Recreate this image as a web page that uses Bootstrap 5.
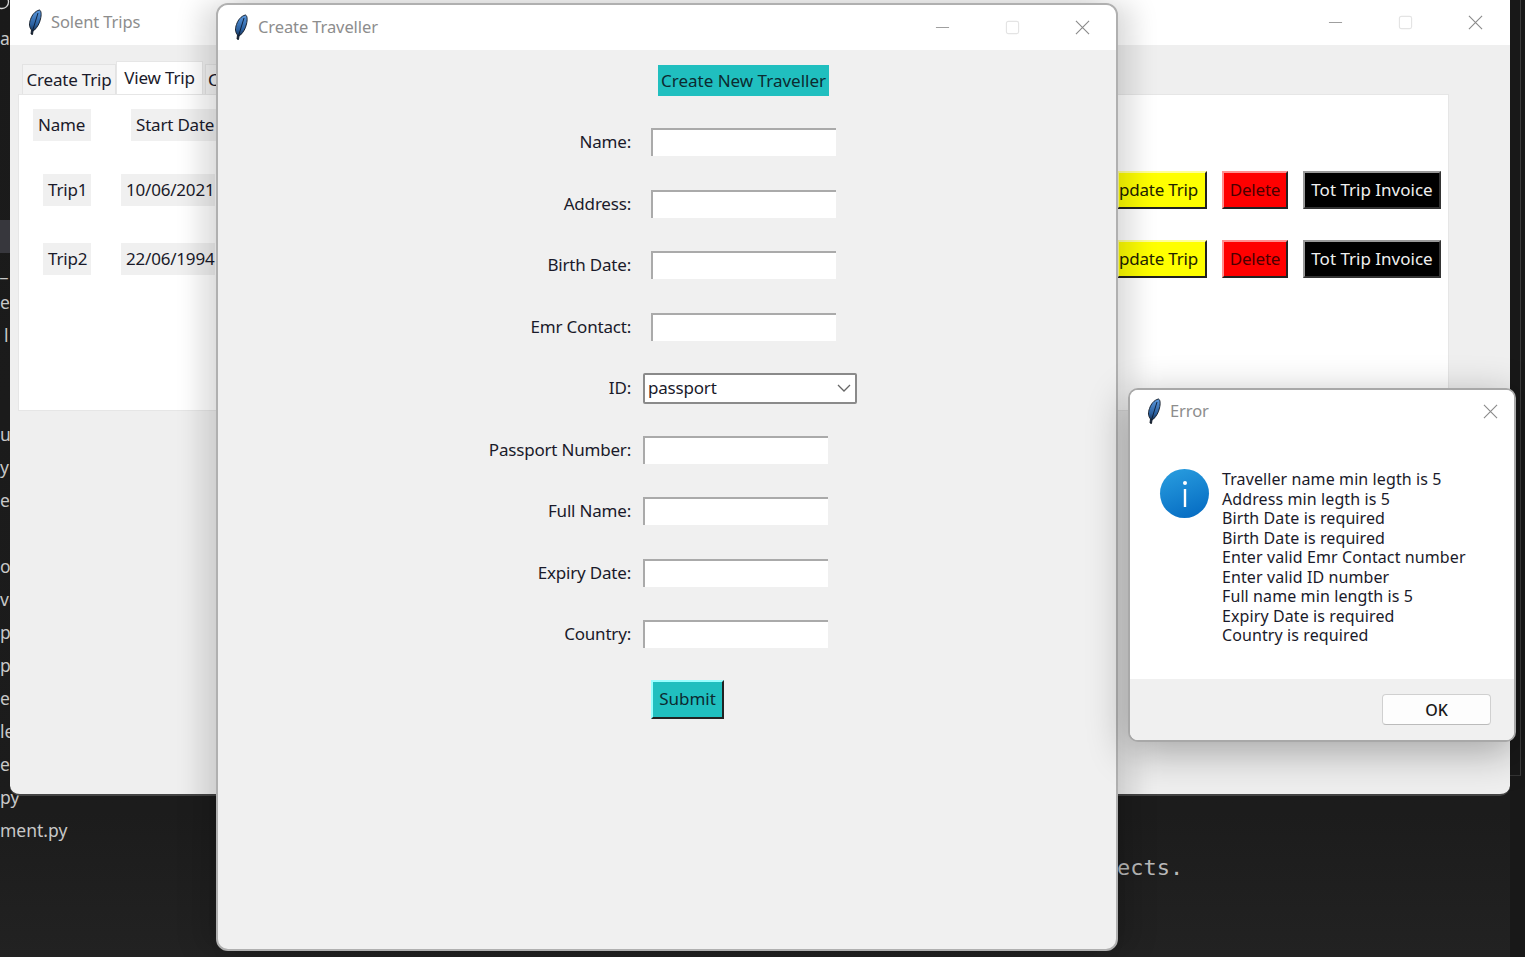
<!DOCTYPE html>
<html lang="en">
<head>
<meta charset="utf-8">
<title>Solent Trips</title>
<link href="https://cdn.jsdelivr.net/npm/bootstrap@5.3.0/dist/css/bootstrap.min.css" rel="stylesheet">
<style>
html,body{height:100%;margin:0;overflow:hidden;background:#1e1e1e}
body{font-family:"Noto Sans","Open Sans",sans-serif;color:#1a1a2a;letter-spacing:-.2px}
.desk{position:relative;width:1525px;height:957px;overflow:hidden;background:linear-gradient(#1a1a1a,#1c1c1c 85%,#222)}
.side-list{padding-top:21.5px;color:#c8c8c8;font-size:17.5px;width:100px;letter-spacing:0}
.side-row{height:33px;line-height:33px;white-space:nowrap}
.side-row.hl{background:#37373d}
.side-row.ind{padding-left:4px}
.ring{position:absolute;left:0;top:0;width:10px;height:11px}
.term-text{position:absolute;left:1117px;top:855px;font:22px/26px "DejaVu Sans Mono",monospace;color:#b9b9b9;letter-spacing:0}
.right-strip{position:absolute;left:1510px;top:0;bottom:0;width:15px;background:#181818}
.strip-box{width:11px;height:776px;border-right:1px solid #3c3c3c;border-bottom:1px solid #333}
.win{position:absolute;overflow:hidden;display:flex;flex-direction:column}
.win-main{left:10px;top:-12px;width:1500px;height:808px;border-radius:10px;background:#efefef;border-bottom:2px solid #444}
.win-trav{left:216px;top:3px;width:902px;height:948px;border-radius:12px;background:#f0f0f0;border:2px solid #b0b0b0;box-shadow:-16px 0 26px rgba(0,0,0,.13),16px 0 26px rgba(0,0,0,.13)}
.win-err{left:1128px;top:388px;width:388px;height:354px;border-radius:10px;background:#fff;border:2px solid #a8a8a8;box-shadow:0 10px 40px rgba(0,0,0,.32)}
.tbar{display:flex;align-items:center;background:#fff;flex:none;color:#8d8d8d;font-size:16.5px;letter-spacing:-.1px}
.tbar-main{height:57px;padding:12px 0 0 14px}
.tbar-trav{height:45px;padding-left:12px}
.tbar-err{height:43px;padding-left:13px}
.feather{width:20px;height:28px;flex:none;margin-right:7px}
.tbar-trav .feather{margin-right:8px}
.wctl{margin-left:auto;display:flex;align-items:center;gap:55px}
.tbar-main .wctl{padding-right:27px}
.tbar-trav .wctl{padding-right:26px}
.tbar-err .wctl{padding-right:16px}
.wctl svg{display:block;width:15px;height:15px}
.tabrow{display:flex;align-items:flex-end;height:49px;padding-left:12px;flex:none}
.tabx{background:#f3f3f3;border:1px solid #e3e3e3;border-bottom:0;font-size:17px;line-height:24px;padding:3px 0 2px;white-space:nowrap;width:94px;text-align:center}
.tabx.on{background:#fff;padding:4px 0 4px;width:87px;border-color:#e6e6e6}
.tabx.off-b{margin-left:2px;width:70px;text-align:left;padding-left:2px}
.panel-x{background:#fff;margin-left:8px;width:1431px;height:317px;border:1px solid #e6e6e6;flex:none;padding-top:14px}
.trow{display:flex;height:32px;font-size:17px}
.trow + .trow{margin-top:33px}
.trow + .trow + .trow{margin-top:37px}
.cell{background:#f0f0f0;line-height:32px;padding:0 5px;white-space:nowrap}
.c-name{margin-left:14px;width:58px}
.c-date{margin-left:40px;width:94px}
.c-trip{margin-left:24px;width:48px}
.c-val{margin-left:30px;width:94px}
.acts{margin-left:auto;display:flex;gap:15px;margin-right:7px;margin-top:-3px;height:38px}
.tkb{display:flex;align-items:center;justify-content:center;height:38px;font-size:17px;border:2px solid;white-space:nowrap;padding:0}
.tkb.y{background:#ff0;width:90px;border-color:#ffff99 #222 #222 #ffff99;color:#222200;justify-content:flex-end;padding-right:7px}
.tkb.r{background:#f00;width:66px;color:#4a0000;border-color:#ff9090 #222 #222 #ff9090}
.tkb.k{background:#000;width:138px;color:#f0f0f0;border-color:#999 #333 #333 #999;letter-spacing:0}
.trav-body{display:flex;flex-direction:column;padding-top:15px;flex:1}
.new-btn{align-self:flex-start;margin-left:440px;width:171px;height:31px;background:#20bfbf;border:0;color:#0c2a30;font-size:17px;line-height:31px;text-align:center;padding:0;margin-bottom:15.25px;white-space:nowrap}
.frow{display:flex;align-items:center;height:61.5px;font-size:17px}
.frow label{width:413px;text-align:right;margin:0;white-space:nowrap}
.tin{display:block;height:28px;width:185px;background:#fff;border:0;border-top:2px solid #aaa;border-left:2px solid #aaa;padding:0;border-radius:0;outline:0}
.t1{margin-left:20px}
.t2{margin-left:12px}
.combo{margin-left:12px;width:214px;height:31px;display:flex;align-items:center;background:#fff;border:2px solid #8a8a8a;border-radius:2px;padding-left:3px;font-size:17px}
.combo svg{margin-left:auto;margin-right:4px;width:14px;height:10px}
.sub-btn{align-self:flex-start;margin-left:433px;margin-top:15px;width:73px;height:39px;background:#20bfbf;border:2px solid;border-color:#9ff #222 #222 #9ff;font-size:17px;color:#0c2a30;padding:0;line-height:34px}
.err-body{flex:1;display:flex;padding:36px 0 0 30px;background:#fff}
.info{width:49px;height:49px;border-radius:50%;background:linear-gradient(160deg,#2a9fe0,#0368c0);display:flex;align-items:center;justify-content:center;flex:none;margin-right:13px}
.err-txt{font-size:16px;line-height:19.5px;letter-spacing:.1px;padding-top:1px}
.err-foot{height:61px;flex:none;background:#f0f0f0;display:flex;justify-content:flex-end;align-items:flex-start;padding:15px 23px 0 0}
.ok-btn{width:109px;height:31px;background:#fdfdfd;border:1px solid #d0d0d0;border-bottom-color:#bbb;border-radius:4px;font-size:16px;font-weight:500;padding:0;color:#1a1a1a}
</style>
</head>
<body>
<svg width="0" height="0" class="position-absolute">
  <defs>
    <linearGradient id="fg" x1="0" y1="0" x2="0" y2="1"><stop offset="0" stop-color="#5a98de"/><stop offset=".6" stop-color="#2a5f9e"/><stop offset="1" stop-color="#0c1a30"/></linearGradient>
    <symbol id="fth" viewBox="0 0 20 28">
      <path d="M15.500 1c2 1 2 5 1 9-1 4.500-3 8-6 11l-1.500 1-.5 3.500-1.500-.5.500-4C5 18 5 14.500 6.500 10.500 8 6 11 2 15.500 1z" fill="url(#fg)" stroke="#0d1520" stroke-width=".9"/>
      <path d="M14 4 8.500 22" stroke="#0b1a30" stroke-width=".9" fill="none"/>
    </symbol>
  </defs>
</svg>
<div class="desk">
  <div class="side-list">
    <div class="side-row">a</div><div class="side-row"></div><div class="side-row"></div><div class="side-row"></div><div class="side-row"></div><div class="side-row"></div>
    <div class="side-row hl"></div><div class="side-row">_</div><div class="side-row">e</div><div class="side-row ind">l</div><div class="side-row"></div><div class="side-row"></div>
    <div class="side-row">u</div><div class="side-row">y</div><div class="side-row">er</div><div class="side-row"></div><div class="side-row">o</div><div class="side-row">ve</div>
    <div class="side-row">p_</div><div class="side-row">p.</div><div class="side-row">er</div><div class="side-row">le</div><div class="side-row">eg</div><div class="side-row">py</div><div class="side-row">ment.py</div>
  </div>
  <svg class="ring" viewBox="0 0 10 11"><circle cx="2" cy="2" r="6.500" fill="none" stroke="#d8d8d8" stroke-width="1.300"/></svg>
  <div class="term-text">ects.</div>
  <div class="right-strip"><div class="strip-box"></div></div>

  <section class="win win-main">
    <div class="tbar tbar-main">
      <svg class="feather"><use href="#fth"/></svg><span>Solent Trips</span>
      <div class="wctl">
        <svg viewBox="0 0 16 16"><path d="M1 8h14" stroke="#999" stroke-width="1"/></svg>
        <svg viewBox="0 0 16 16"><rect x="1.500" y="1.500" width="13" height="13" rx="2" fill="none" stroke="#e4e4e4" stroke-width="1.200"/></svg>
        <svg viewBox="0 0 16 16"><path d="M1 1l14 14M15 1L1 15" stroke="#8a8a8a" stroke-width="1.200"/></svg>
      </div>
    </div>
    <div class="tabrow">
      <div class="tabx">Create Trip</div><div class="tabx on">View Trip</div><div class="tabx off-b">C</div>
    </div>
    <div class="panel-x">
      <div class="trow"><div class="cell c-name">Name</div><div class="cell c-date">Start Date</div></div>
      <div class="trow"><div class="cell c-trip">Trip1</div><div class="cell c-val">10/06/2021</div>
        <div class="acts"><div class="tkb y">pdate Trip</div><div class="tkb r">Delete</div><div class="tkb k">Tot Trip Invoice</div></div></div>
      <div class="trow"><div class="cell c-trip">Trip2</div><div class="cell c-val">22/06/1994</div>
        <div class="acts"><div class="tkb y">pdate Trip</div><div class="tkb r">Delete</div><div class="tkb k">Tot Trip Invoice</div></div></div>
    </div>
  </section>

  <section class="win win-trav">
    <div class="tbar tbar-trav">
      <svg class="feather"><use href="#fth"/></svg><span>Create Traveller</span>
      <div class="wctl">
        <svg viewBox="0 0 16 16"><path d="M1 8h14" stroke="#999" stroke-width="1"/></svg>
        <svg viewBox="0 0 16 16"><rect x="1.500" y="1.500" width="13" height="13" rx="2" fill="none" stroke="#e4e4e4" stroke-width="1.200"/></svg>
        <svg viewBox="0 0 16 16"><path d="M1 1l14 14M15 1L1 15" stroke="#8a8a8a" stroke-width="1.200"/></svg>
      </div>
    </div>
    <div class="trav-body">
      <button type="button" class="new-btn">Create New Traveller</button>
      <div class="frow"><label>Name:</label><input class="tin t1" type="text"></div>
      <div class="frow"><label>Address:</label><input class="tin t1" type="text"></div>
      <div class="frow"><label>Birth Date:</label><input class="tin t1" type="text"></div>
      <div class="frow"><label>Emr Contact:</label><input class="tin t1" type="text"></div>
      <div class="frow"><label>ID:</label><div class="combo"><span>passport</span><svg viewBox="0 0 14 10"><path d="M1 2l6 6 6-6" fill="none" stroke="#666" stroke-width="1.300"/></svg></div></div>
      <div class="frow"><label>Passport Number:</label><input class="tin t2" type="text"></div>
      <div class="frow"><label>Full Name:</label><input class="tin t2" type="text"></div>
      <div class="frow"><label>Expiry Date:</label><input class="tin t2" type="text"></div>
      <div class="frow"><label>Country:</label><input class="tin t2" type="text"></div>
      <button type="button" class="sub-btn">Submit</button>
    </div>
  </section>

  <section class="win win-err">
    <div class="tbar tbar-err">
      <svg class="feather"><use href="#fth"/></svg><span>Error</span>
      <div class="wctl"><svg viewBox="0 0 16 16"><path d="M1 1l14 14M15 1L1 15" stroke="#8a8a8a" stroke-width="1.200"/></svg></div>
    </div>
    <div class="err-body">
      <div class="info"><svg width="8" height="30" viewBox="0 0 8 30"><circle cx="4" cy="4" r="2" fill="#fff"/><rect x="2.800" y="10" width="2.400" height="18" fill="#fff"/></svg></div>
      <div class="err-txt">Traveller name min legth is 5<br>Address min legth is 5<br>Birth Date is required<br>Birth Date is required<br>Enter valid Emr Contact number<br>Enter valid ID number<br>Full name min length is 5<br>Expiry Date is required<br>Country is required</div>
    </div>
    <div class="err-foot"><button type="button" class="ok-btn">OK</button></div>
  </section>
</div>
<script src="https://cdn.jsdelivr.net/npm/bootstrap@5.3.0/dist/js/bootstrap.bundle.min.js"></script>
</body>
</html>
